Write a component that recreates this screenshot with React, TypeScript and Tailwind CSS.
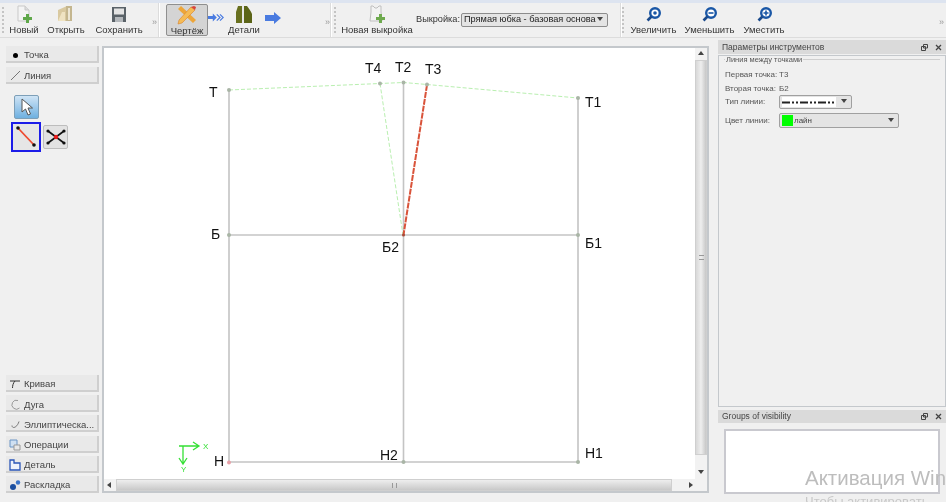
import type { ReactNode } from "react";

const font = "font-['Liberation_Sans',Arial,sans-serif]";

function Handle() {
  return <div className="w-[3px] h-[26px] mx-[2px] shrink-0 border-l-2 border-dotted border-[#c4c4c4]" />;
}

function More() {
  return <span className="text-[9px] text-[#999] leading-none mt-[3px]">»</span>;
}

function ToolBtn({ icon, label, w, active }: { icon: ReactNode; label: string; w: string; active?: boolean }) {
  return (
    <div
      className={`${w} h-[32px] flex flex-col items-center justify-between shrink-0 rounded-[2px] ${
        active ? "bg-[#d4d4d4] border border-[#8f8f8f]" : ""
      }`}
    >
      <div className="h-[20px] flex items-center justify-center">{icon}</div>
      <span className="text-[9.5px] leading-[12px] text-[#333] whitespace-nowrap">{label}</span>
    </div>
  );
}

function Sep() {
  return <div className="w-[2px] h-[34px] bg-[#dcdcdc] border-r border-white shrink-0" />;
}

function NewIcon() {
  return (
    <svg width="18" height="20" viewBox="0 0 18 20">
      <path d="M3 2h7l4 4v11H3z" fill="#f4f4f4" stroke="#c9c9c9" />
      <path d="M10 2v4h4" fill="#ddd" stroke="#c9c9c9" />
      <path d="M11 10h3v3h3v3h-3v3h-3v-3H8v-3h3z" fill="#5fa84a" />
    </svg>
  );
}

function OpenIcon() {
  return (
    <svg width="18" height="20" viewBox="0 0 18 20">
      <path d="M1 6l9-4v15H1z" fill="#d9c9a0" />
      <path d="M9 2h6v15H9z" fill="#c4b68f" />
      <path d="M11 4h2v12h-2z" fill="#ece6d4" />
      <path d="M1 17l4-9h3v9z" fill="#efe3c2" />
    </svg>
  );
}

function SaveIcon() {
  return (
    <svg width="16" height="17" viewBox="0 0 16 17">
      <path d="M1 1h14v15H1z" fill="#5a6268" />
      <path d="M3 2.500h10v6H3z" fill="#e4e4e4" />
      <path d="M4 11h8v5H4z" fill="#b4b8bc" />
    </svg>
  );
}

function DraftIcon() {
  return (
    <svg width="20" height="20" viewBox="0 0 20 20">
      <path d="M1 4l3-3 15 14-3 3z" fill="#eda63a" />
      <path d="M2 15L14 2l4 3L5 18l-4 1z" fill="#f5bb55" stroke="#d8822a" strokeWidth="0.6" />
      <path d="M14 2l4 3 1-3-2-1z" fill="#d8433a" />
    </svg>
  );
}

function DetailIcon() {
  return (
    <svg width="18" height="19" viewBox="0 0 18 19">
      <path d="M1 18V7l2-6h4v17z" fill="#68701f" />
      <path d="M9 18V1h3c2 3 4 5 5 8v9z" fill="#5b6417" />
      <path d="M8 1v17" stroke="#ddd" />
    </svg>
  );
}

function Arrow({ double }: { double?: boolean }) {
  if (double) {
    return (
      <svg width="16" height="9" viewBox="0 0 20 10" className="shrink-0 mt-[-6px]">
        <path d="M0 3h6V0l5 5-5 5V7H0z" fill="#4a7be0" />
        <path d="M11 1l4 4-4 4M15 1l4 4-4 4" fill="none" stroke="#4a7be0" strokeWidth="1.500" />
      </svg>
    );
  }
  return (
    <svg width="16" height="12" viewBox="0 0 16 12" className="shrink-0 mt-[-5px] ml-[1px]">
      <path d="M0 3h9V0l7 6-7 6V9H0z" fill="#4a7be0" />
    </svg>
  );
}

function PatternIcon() {
  return (
    <svg width="18" height="20" viewBox="0 0 18 20">
      <path d="M3 2h2l2 2h2l2-2h2v6l1 9H2l1-9z" fill="#f3f3f3" stroke="#bfbfbf" />
      <path d="M11 10h3v3h3v3h-3v3h-3v-3H8v-3h3z" fill="#6eaa4e" />
    </svg>
  );
}

function ZoomIcon({ sign }: { sign: "+" | "-" | "o" }) {
  return (
    <svg width="15" height="15" viewBox="0 0 15 15">
      <circle cx="9" cy="6" r="4.800" fill="#fff" stroke="#1a57a6" strokeWidth="2.400" />
      <path d="M5.500 9.500L1.500 13.500" stroke="#1a4a8c" strokeWidth="2.600" />
      {sign === "+" && <path d="M6.500 6h5M9 3.500v5" stroke="#1a57a6" strokeWidth="1.600" />}
      {sign === "-" && <path d="M6.500 6h5" stroke="#1a57a6" strokeWidth="1.600" />}
      {sign === "o" && <circle cx="9" cy="6" r="1.800" fill="#1a57a6" />}
    </svg>
  );
}

function Tab({ icon, label }: { icon: ReactNode; label: string }) {
  return (
    <div className="h-[17px] w-[93px] flex items-center gap-[3px] pl-[3px] pt-[3px] bg-[#e9e9e9] border-r-2 border-b-2 border-[#cfcfcf]">
      <div className="w-[12px] h-[12px] flex items-center justify-center shrink-0">{icon}</div>
      <span className="text-[9.5px] leading-none text-[#444] whitespace-nowrap">{label}</span>
    </div>
  );
}

function CanvasLabel({ x, y, children }: { x: string; y: string; children: string }) {
  return <span className={`absolute ${x} ${y} text-[14px] leading-[16px] text-[#111]`}>{children}</span>;
}

function Drawing() {
  return (
    <svg width="592" height="431" viewBox="104 48 592 431" className="absolute left-0 top-0">
      <g fill="none" stroke="#c4c4c4" strokeWidth="1.600">
        <path d="M229 90V462H578V98" />
        <path d="M229 235H578" />
        <path d="M403.500 82V462" />
      </g>
      <g fill="none" stroke="#b9efb0" strokeWidth="1" strokeDasharray="4 2">
        <path d="M229 90L380 83.500L403.500 82.500L427 84.500L578 98" />
        <path d="M380 83.500L403 235" />
      </g>
      <path d="M427 85L403.500 235" stroke="#d9533a" strokeWidth="2" strokeDasharray="6 1" fill="none" />
      <g fill="#a9b5a6">
        <circle cx="229" cy="90" r="2" />
        <circle cx="380" cy="83.500" r="2" />
        <circle cx="403.500" cy="82.500" r="2" />
        <circle cx="427" cy="84.500" r="2" />
        <circle cx="578" cy="98" r="2" />
        <circle cx="229" cy="235" r="2" />
        <circle cx="578" cy="235" r="2" />
        <circle cx="403.500" cy="462" r="2" />
        <circle cx="578" cy="462" r="2" />
      </g>
      <circle cx="403.500" cy="235" r="1.500" fill="#a84a3a" />
      <circle cx="229" cy="462.500" r="2" fill="#e8a0a8" />
      <g fill="none" stroke="#35e035" strokeWidth="1.300">
        <path d="M179 446H198M193 442l6 4-6 4" />
        <path d="M183 446V463M179 458l4 6 4-6" />
      </g>
    </svg>
  );
}

function ScrollArrow({ dir }: { dir: "up" | "down" | "left" | "right" }) {
  const d = { up: "M0 4L3 0l3 4z", down: "M0 0l3 4 3-4z", left: "M4 0L0 3l4 3z", right: "M0 0l4 3-4 3z" }[dir];
  return (
    <svg width="6" height="6" viewBox="0 0 6 6" className="shrink-0">
      <path d={d} fill="#444" />
    </svg>
  );
}

function DockTitle({ label, h }: { label: string; h: string }) {
  return (
    <div className={`${h} flex items-center justify-between pl-[4px] pr-[4px] bg-[#dadada] shrink-0`}>
      <span className="text-[8.5px] leading-none text-[#444]">{label}</span>
      <span className="flex items-center gap-[7px]">
        <svg width="7" height="7" viewBox="0 0 7 7">
          <path d="M2.500 .5h4v3.500h-4zM.5 2.500h4v4h-4z" fill="#dadada" stroke="#444" />
        </svg>
        <svg width="7" height="7" viewBox="0 0 7 7">
          <path d="M1 1l5 5M6 1L1 6" stroke="#444" strokeWidth="1.300" />
        </svg>
      </span>
    </div>
  );
}

export default function App() {
  return (
    <div className={`${font} w-[946px] h-[502px] overflow-hidden bg-[#f0f0f0] flex flex-col blur-[0.4px]`}>
      <div className="h-[3px] bg-[#dde4f0] shrink-0" />

      {/* Toolbar */}
      <div className="h-[35px] shrink-0 flex items-center bg-[#f0f0f0] border-b border-[#dcdcdc]">
        <div className="w-[158px] flex items-center shrink-0">
          <Handle />
          <ToolBtn w="w-[34px]" icon={<NewIcon />} label="Новый" />
          <ToolBtn w="w-[50px]" icon={<OpenIcon />} label="Открыть" />
          <ToolBtn w="w-[56px]" icon={<SaveIcon />} label="Сохранить" />
          <div className="ml-[5px]"><More /></div>
        </div>
        <Sep />
        <div className="w-[170px] flex items-center shrink-0 pl-[6px]">
          <ToolBtn w="w-[42px]" active icon={<DraftIcon />} label="Чертёж" />
          <Arrow double />
          <ToolBtn w="w-[40px]" icon={<DetailIcon />} label="Детали" />
          <Arrow />
          <div className="ml-auto"><More /></div>
        </div>
        <Sep />
        <div className="w-[288px] flex items-center shrink-0">
          <Handle />
          <ToolBtn w="w-[76px]" icon={<PatternIcon />} label="Новая выкройка" />
          <span className="ml-[1px] text-[9.2px] text-[#333] whitespace-nowrap">Выкройка:</span>
          <div className="ml-[1px] w-[147px] h-[14px] flex items-center justify-between pl-[2px] pr-[4px] bg-[#e4e4e4] border border-[#8c8c8c] rounded-[2px]">
            <span className="text-[9.2px] leading-none text-[#222] whitespace-nowrap">Прямая юбка - базовая основа</span>
            <ScrollArrow dir="down" />
          </div>
        </div>
        <Sep />
        <div className="flex-1 flex items-center ml-[-2px]">
          <Handle />
          <ToolBtn w="w-[53px]" icon={<ZoomIcon sign="o" />} label="Увеличить" />
          <ToolBtn w="w-[59px]" icon={<ZoomIcon sign="-" />} label="Уменьшить" />
          <ToolBtn w="w-[50px]" icon={<ZoomIcon sign="+" />} label="Уместить" />
          <div className="ml-auto mr-[2px]"><More /></div>
        </div>
      </div>

      {/* Main */}
      <div className="flex-1 flex min-h-0">
        {/* Left tools */}
        <div className="w-[102px] shrink-0 flex flex-col pl-[6px] pt-[8px] pb-[9px]">
          <div className="flex flex-col gap-[3.500px]">
            <Tab icon={<span className="w-[5px] h-[5px] rounded-full bg-black" />} label="Точка" />
            <Tab
              icon={
                <svg width="11" height="11" viewBox="0 0 11 11">
                  <path d="M1 10L10 1" stroke="#777" />
                </svg>
              }
              label="Линия"
            />
          </div>
          <div className="mt-[11px] ml-[8px] w-[25px] h-[24px] bg-gradient-to-b from-[#cfe4f5] to-[#6eb0e0] border border-[#7d9fb8] rounded-[2px] flex items-center justify-center">
            <svg width="14" height="18" viewBox="0 0 14 18">
              <path d="M2 1v13l3.500-3 2.500 6 2.500-1-2.500-6h4.500z" fill="#fff" stroke="#555" />
            </svg>
          </div>
          <div className="mt-[3px] ml-[5px] flex items-center gap-[2px]">
            <div className="w-[30px] h-[30px] bg-[#e6e6e6] border-2 border-[#1c1ce8] flex items-center justify-center">
              <svg width="24" height="24" viewBox="0 0 24 24">
                <path d="M4 3L20 20" stroke="#ee4a30" strokeWidth="1.800" />
                <circle cx="4" cy="3" r="1.800" fill="#111" />
                <circle cx="20" cy="20" r="1.800" fill="#111" />
              </svg>
            </div>
            <div className="w-[25px] h-[24px] bg-[#e2e2e2] border border-[#bdbdbd] rounded-[2px] flex items-center justify-center">
              <svg width="20" height="16" viewBox="0 0 20 16">
                <path d="M2 2L18 14M2 14L18 2" stroke="#111" strokeWidth="1.600" />
                <circle cx="10" cy="8" r="2.200" fill="#e81c1c" />
                <circle cx="2" cy="2" r="1.600" fill="#111" />
                <circle cx="18" cy="2" r="1.600" fill="#111" />
                <circle cx="2" cy="14" r="1.600" fill="#111" />
                <circle cx="18" cy="14" r="1.600" fill="#111" />
              </svg>
            </div>
          </div>

          <div className="mt-auto flex flex-col gap-[3.200px]">
            <Tab
              icon={
                <svg width="12" height="10" viewBox="0 0 12 10">
                  <path d="M1 2h10M6 2C4 4 3.500 7 3.500 9" fill="none" stroke="#333" />
                </svg>
              }
              label="Кривая"
            />
            <Tab
              icon={
                <svg width="11" height="11" viewBox="0 0 11 11">
                  <path d="M8 1.500A4.500 4.500 0 1 0 9.500 9" fill="none" stroke="#999" />
                </svg>
              }
              label="Дуга"
            />
            <Tab
              icon={
                <svg width="11" height="11" viewBox="0 0 11 11">
                  <path d="M2 6.500C2 10 7 9 9 2.500" fill="none" stroke="#777" />
                </svg>
              }
              label="Эллиптическа..."
            />
            <Tab
              icon={
                <svg width="12" height="12" viewBox="0 0 12 12">
                  <path d="M1 1h7v7H1z" fill="#cfe0f2" stroke="#6a94c4" />
                  <path d="M5 6h6v5H5z" fill="#e8e8e8" stroke="#999" />
                </svg>
              }
              label="Операции"
            />
            <Tab
              icon={
                <svg width="12" height="12" viewBox="0 0 12 12">
                  <path d="M1 1h4v3h6v7H1z" fill="#eef2fb" stroke="#2a55b8" strokeWidth="1.300" />
                </svg>
              }
              label="Деталь"
            />
            <Tab
              icon={
                <svg width="12" height="12" viewBox="0 0 12 12">
                  <circle cx="4" cy="8" r="3" fill="#1c4fa0" />
                  <circle cx="9" cy="3.500" r="2.200" fill="#3b74c8" />
                </svg>
              }
              label="Раскладка"
            />
          </div>
        </div>

        {/* Canvas */}
        <div className="w-[607px] shrink-0 mt-[8px] mb-[9px] border-2 border-[#c4c8cc] flex flex-col bg-white">
          <div className="flex-1 flex min-h-0">
            <div className="relative flex-1 bg-white overflow-hidden">
              <Drawing />
              <CanvasLabel x="left-[105px]" y="top-[36px]">Т</CanvasLabel>
              <CanvasLabel x="left-[261px]" y="top-[12px]">Т4</CanvasLabel>
              <CanvasLabel x="left-[291px]" y="top-[11px]">Т2</CanvasLabel>
              <CanvasLabel x="left-[321px]" y="top-[13px]">Т3</CanvasLabel>
              <CanvasLabel x="left-[481px]" y="top-[46px]">Т1</CanvasLabel>
              <CanvasLabel x="left-[107px]" y="top-[178px]">Б</CanvasLabel>
              <CanvasLabel x="left-[278px]" y="top-[191px]">Б2</CanvasLabel>
              <CanvasLabel x="left-[481px]" y="top-[187px]">Б1</CanvasLabel>
              <CanvasLabel x="left-[110px]" y="top-[405px]">Н</CanvasLabel>
              <CanvasLabel x="left-[276px]" y="top-[399px]">Н2</CanvasLabel>
              <CanvasLabel x="left-[481px]" y="top-[397px]">Н1</CanvasLabel>
              <span className="absolute left-[99px] top-[395px] text-[8px] leading-none text-[#35e035]">X</span>
              <span className="absolute left-[77px] top-[418px] text-[8px] leading-none text-[#35e035]">Y</span>
            </div>
            {/* vertical scrollbar */}
            <div className="w-[12px] bg-[#f2f2f2] flex flex-col">
              <div className="h-[12px] flex items-center justify-center"><ScrollArrow dir="up" /></div>
              <div className="flex-1 mb-[12px] bg-gradient-to-r from-[#d8d8d8] via-[#eeeeee] to-[#c8c8c8] border border-[#cfcfcf] flex items-center justify-center">
                <div className="w-[5px] h-[5px] border-y border-[#999]" />
              </div>
              <div className="h-[12px] flex items-center justify-center"><ScrollArrow dir="down" /></div>
            </div>
          </div>
          {/* horizontal scrollbar */}
          <div className="h-[12px] bg-[#f2f2f2] flex items-center">
            <div className="w-[12px] flex justify-center"><ScrollArrow dir="left" /></div>
            <div className="flex-1 h-[12px] mr-[14px] bg-gradient-to-b from-[#eeeeee] to-[#c9c9c9] border border-[#cfcfcf] flex items-center justify-center">
              <div className="w-[5px] h-[5px] border-x border-[#999]" />
            </div>
            <div className="w-[12px] flex justify-center"><ScrollArrow dir="right" /></div>
            <div className="w-[9px]" />
          </div>
        </div>

        {/* Right docks */}
        <div className="relative flex-1 ml-[9px] flex flex-col min-w-0 overflow-hidden">
          <div className="mt-[2px]">
            <DockTitle h="h-[14px]" label="Параметры инструментов" />
          </div>
          <div className="h-[352px] shrink-0 border border-[#c4c8cc] mt-[1px] pl-[6px] relative">
            <div className="absolute left-[5px] right-[5px] top-[3px] border-t border-[#cfcfcf]" />
            <span className="absolute left-[6px] top-0 px-[1px] bg-[#f0f0f0] text-[7.500px] leading-[8px] text-[#555]">Линия между точками</span>
            <div className="pt-[13px] text-[8px] leading-none text-[#555] flex flex-col">
              <div className="flex h-[12px] items-center"><span className="w-[53px]">Первая точка:</span><span className="ml-[1px]">Т3</span></div>
              <div className="flex h-[12px] items-center mt-[2px]"><span className="w-[53px]">Вторая точка:</span><span className="ml-[1px]">Б2</span></div>
              <div className="flex items-center">
                <span className="w-[53px]">Тип линии:</span>
                <div className="ml-[1px] w-[73px] h-[14px] bg-[#e4e4e4] border border-[#a0a0a0] rounded-[2px] flex items-center justify-between pr-[4px] pl-[2px]">
                  <div className="w-[54px] h-[10px] bg-white flex items-center">
                    <svg width="54" height="3" viewBox="0 0 54 3">
                      <path d="M0 1.500H54" stroke="#222" strokeWidth="2" strokeDasharray="8 2 2 2 2 2" />
                    </svg>
                  </div>
                  <ScrollArrow dir="down" />
                </div>
              </div>
              <div className="flex items-center mt-[4px]">
                <span className="w-[53px]">Цвет линии:</span>
                <div className="ml-[1px] w-[120px] h-[15px] bg-[#e4e4e4] border border-[#a0a0a0] rounded-[2px] flex items-center justify-between pr-[4px] pl-[2px]">
                  <div className="flex items-center">
                    <span className="w-[11px] h-[11px] bg-[#00ff00]" />
                    <span className="ml-[1px] text-[#444]">лайн</span>
                  </div>
                  <ScrollArrow dir="down" />
                </div>
              </div>
            </div>
          </div>
          <div className="mt-[3px]">
            <DockTitle h="h-[13px]" label="Groups of visibility" />
          </div>
          <div className="mx-[6px] mt-[6px] h-[65px] bg-white border-2 border-[#c9c9cf]" />
          <div className="absolute left-[87px] top-[429px] text-[20.500px] leading-[22px] text-[#bdbdbd] whitespace-nowrap">Активация Windows</div>
          <div className="absolute left-[87px] top-[456px] text-[13px] leading-[15px] text-[#c8c8c8] whitespace-nowrap">Чтобы активировать</div>
        </div>
      </div>
    </div>
  );
}
